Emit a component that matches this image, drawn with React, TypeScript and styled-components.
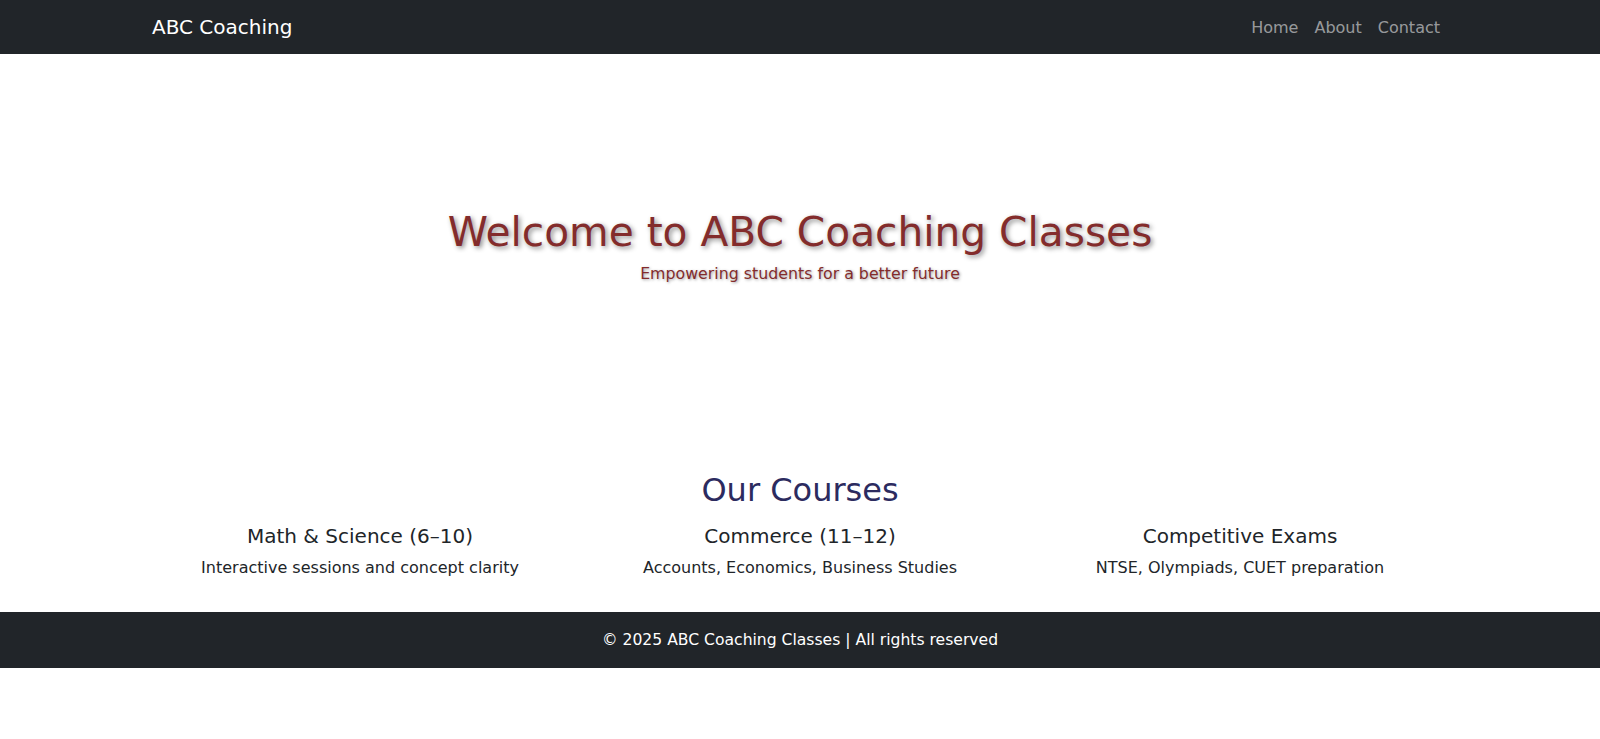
import React from "react";
import styled, { createGlobalStyle } from "styled-components";

const GlobalStyle = createGlobalStyle`
  * { box-sizing: border-box; }
  body {
    margin: 0;
    font-family: "DejaVu Sans", "Open Sans", sans-serif;
    color: #212529;
    background: #ffffff;
  }
  h1, h2, h4, h5, p { margin: 0; font-weight: 400; }
`;

const Container = styled.div`
  max-width: 1320px;
  margin: 0 auto;
  padding: 0 12px;
`;

const NavBar = styled.nav`
  background: #212529;
  height: 54px;
`;

const NavInner = styled(Container)`
  height: 100%;
  display: flex;
  align-items: center;
  justify-content: space-between;
`;

const Brand = styled.a`
  color: #ffffff;
  font-size: 20px;
  text-decoration: none;
`;

const NavList = styled.ul`
  list-style: none;
  margin: 0;
  padding: 0;
  display: flex;
`;

const NavLink = styled.a`
  display: block;
  padding: 0 8px;
  color: rgba(255, 255, 255, 0.55);
  font-size: 16px;
  text-decoration: none;
`;

const Hero = styled.section`
  height: 386px;
  display: flex;
  flex-direction: column;
  align-items: center;
  justify-content: center;
  text-align: center;
`;

const HeroTitle = styled.h1`
  font-size: 40.7px;
  line-height: 48px;
  color: #832c2c;
  text-shadow: 2px 2px 5px rgba(0, 0, 0, 0.45);
  margin-bottom: 6px;
`;

const HeroSub = styled.p`
  font-size: 15.8px;
  line-height: 24px;
  color: #832c2c;
  text-shadow: 1px 1px 3px rgba(0, 0, 0, 0.4);
`;

const Courses = styled.section`
  padding: 31px 0 32px;
  text-align: center;
`;

const SectionTitle = styled.h2`
  font-size: 32px;
  line-height: 1.2;
  color: #2c2b5f;
  margin-bottom: 15px;
`;

const CourseGrid = styled.div`
  display: grid;
  grid-template-columns: repeat(3, 1fr);
  margin: 0 -12px;
`;

const CourseCard = styled.div`
  padding: 0 12px;
`;

const CourseName = styled.h4`
  font-size: 20px;
  line-height: 1.2;
  margin-bottom: 8px;
`;

const CourseDesc = styled.p`
  font-size: 16px;
  line-height: 1.5;
`;

const Footer = styled.footer`
  background: #212529;
  color: #ffffff;
  text-align: center;
  padding: 16px 0;
  font-size: 15.6px;
  line-height: 24px;
`;

const courses = [
  { name: "Math & Science (6–10)", desc: "Interactive sessions and concept clarity" },
  { name: "Commerce (11–12)", desc: "Accounts, Economics, Business Studies" },
  { name: "Competitive Exams", desc: "NTSE, Olympiads, CUET preparation" },
];

export default function App() {
  return (
    <>
      <GlobalStyle />
      <NavBar>
        <NavInner>
          <Brand href="#">ABC Coaching</Brand>
          <NavList>
            <li><NavLink href="#">Home</NavLink></li>
            <li><NavLink href="#">About</NavLink></li>
            <li><NavLink href="#">Contact</NavLink></li>
          </NavList>
        </NavInner>
      </NavBar>
      <Hero>
        <HeroTitle>Welcome to ABC Coaching Classes</HeroTitle>
        <HeroSub>Empowering students for a better future</HeroSub>
      </Hero>
      <Courses>
        <Container>
          <SectionTitle>Our Courses</SectionTitle>
          <CourseGrid>
            {courses.map((c) => (
              <CourseCard key={c.name}>
                <CourseName>{c.name}</CourseName>
                <CourseDesc>{c.desc}</CourseDesc>
              </CourseCard>
            ))}
          </CourseGrid>
        </Container>
      </Courses>
      <Footer>© 2025 ABC Coaching Classes | All rights reserved</Footer>
    </>
  );
}
